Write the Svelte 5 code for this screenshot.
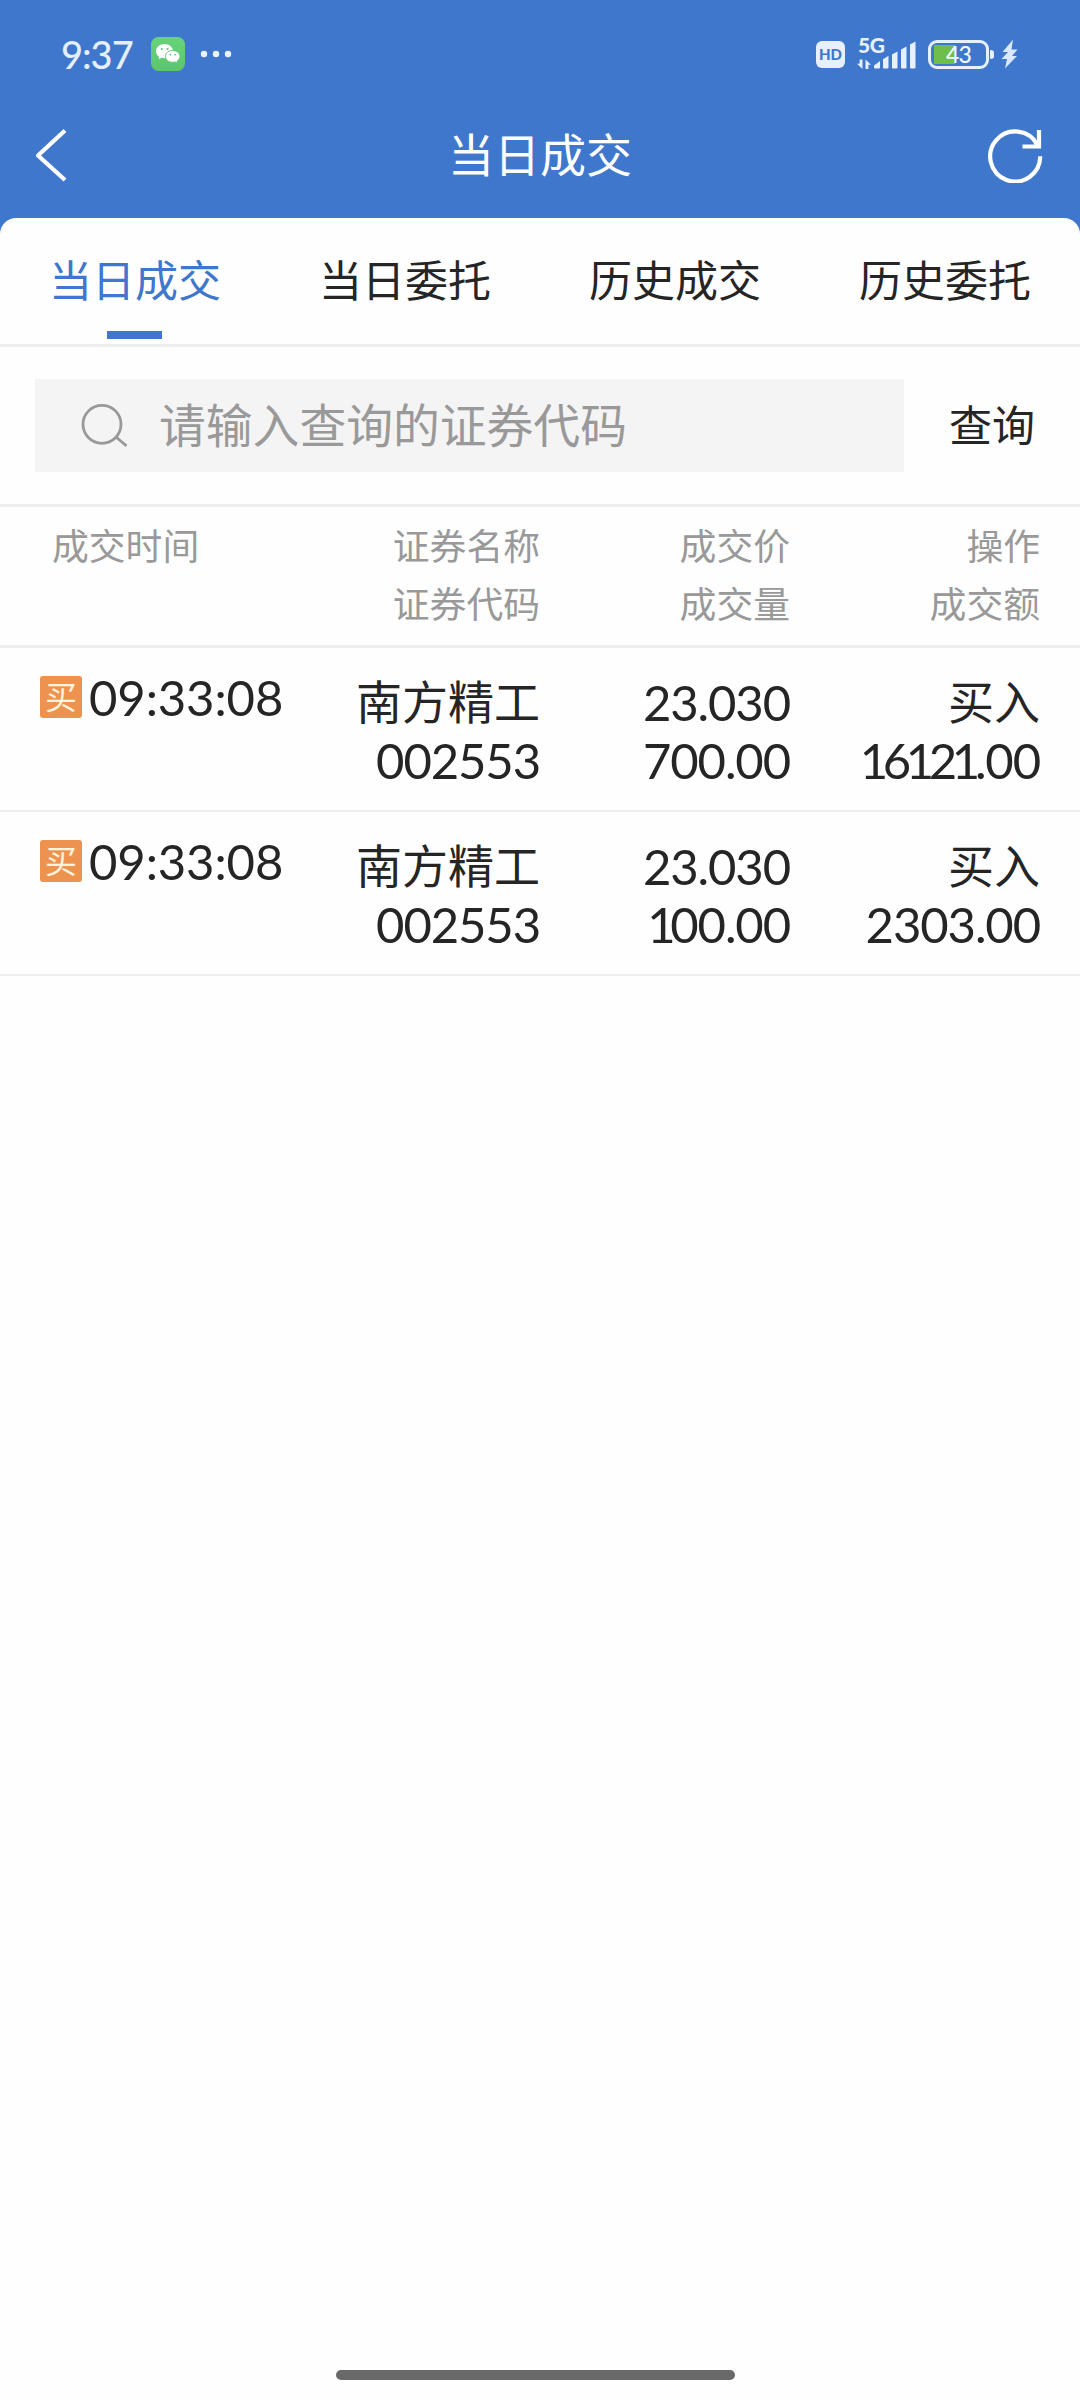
<script lang="ts">
  type Trade = {
    time: string;
    name: string;
    code: string;
    price: string;
    volume: string;
    side: string;
    amount: string;
  };

  const tabs = ['当日成交', '当日委托', '历史成交', '历史委托'];
  let activeTab = $state(0);

  const columns = [
    ['成交时间'],
    ['证券名称', '证券代码'],
    ['成交价', '成交量'],
    ['操作', '成交额'],
  ];

  const trades: Trade[] = [
    { time: '09:33:08', name: '南方精工', code: '002553', price: '23.030', volume: '700.00', side: '买入', amount: '16121.00' },
    { time: '09:33:08', name: '南方精工', code: '002553', price: '23.030', volume: '100.00', side: '买入', amount: '2303.00' },
  ];

  // a "1" is set narrower than the other digits
  const digits = (value: string) => value.split(/(1)/).filter(Boolean);
</script>

{#snippet num(value: string)}
  <span class="num">{#each digits(value) as part}{#if part === '1'}<span class="one">1</span>{:else}{part}{/if}{/each}</span>
{/snippet}

<div class="screen">
  <header>
    <div class="status">
      <span class="clock">9:37</span>
      <svg class="wechat" width="34" height="34" viewBox="0 0 34 34">
        <defs>
          <linearGradient id="green" x1="0" y1="0" x2="0" y2="1">
            <stop offset="0" stop-color="#67d47c" />
            <stop offset="1" stop-color="#5bc56b" />
          </linearGradient>
        </defs>
        <rect width="34" height="34" rx="7.5" fill="url(#green)" />
        <path d="M13.5 7C8.8 7 5 10.2 5 14.2c0 2.2 1.2 4.2 3 5.500L7.800 22.300l3-1.500c.9.2 1.800.4 2.700.4 4.700 0 8.500-3.200 8.500-7.100S18.200 7 13.500 7z" fill="#fff" />
        <path d="M21.700 13.500c-4 0-7.300 2.600-7.300 5.900s3.300 5.900 7.300 5.900c.9 0 1.800-.1 2.500-.4l2.500 1.400-.5-2.300c1.700-1.100 2.800-2.700 2.800-4.600 0-3.300-3.300-5.900-7.300-5.900z" fill="#fff" stroke="#60cb72" stroke-width="1" />
        <circle cx="10.800" cy="12" r="1.100" fill="#60cb72" />
        <circle cx="16.600" cy="12" r="1.100" fill="#60cb72" />
        <circle cx="19.300" cy="17.600" r=".9" fill="#60cb72" />
        <circle cx="24.200" cy="17.600" r=".9" fill="#60cb72" />
      </svg>
      <svg class="dots" width="32" height="8" viewBox="0 0 32 8" fill="#e9f2ff">
        <circle cx="4" cy="4" r="3.200" />
        <circle cx="16" cy="4" r="3.200" />
        <circle cx="28" cy="4" r="3.200" />
      </svg>
      <span class="grow"></span>
      <span class="hd">HD</span>
      <div class="signal">
        <span class="net">5G</span>
        <svg width="60" height="32" viewBox="0 0 60 32" fill="#e6f0ff">
          <path d="M5.500 21.500v9.500L0 25.700h2.600v-4.200zM8.500 31v-9.500l5.500 5.300h-2.600V31z" />
          <path d="M17 30.500v-3l6-4.500v6.500q0 1-1 1h-4q-1 0-1-1z" />
          <path d="M26 21.300l5.500-3.500v11.700q0 1-1 1H27q-1 0-1-1z" />
          <path d="M35 16.500l5.500-3v16q0 1-1 1H36q-1 0-1-1z" />
          <path d="M44 11.500l5.500-3v21q0 1-1 1H45q-1 0-1-1z" />
          <path d="M53 6.500l5.500-3v26q0 1-1 1H54q-1 0-1-1z" />
        </svg>
      </div>
      <div class="battery"><span>43</span></div>
      <i class="cap"></i>
      <svg class="bolt" width="18" height="30" viewBox="0 0 18 30">
        <path d="M12 .5L1.500 13H7L.5 20H6L4 29.500 16 17h-5l5.500-6.500H10.500z" fill="#dbe8ff" />
      </svg>
    </div>

    <div class="nav">
      <svg width="36" height="56" viewBox="0 0 36 56" fill="none" stroke="#fff" stroke-width="4.200">
        <path d="M32 3.500L5 28.500l27 24.500" stroke-linejoin="round" />
      </svg>
      <h1>当日成交</h1>
      <svg width="56" height="56" viewBox="0 0 56 56" fill="none" stroke="#fff" stroke-width="4.200">
        <path d="M53.200 29.200A25 25 0 1 1 50.400 18" />
        <path d="M52 3v16.500H35.500" />
      </svg>
    </div>
  </header>

  <main>
    <nav class="tabs">
      {#each tabs as tab, i}
        <button class:active={i === activeTab} onclick={() => (activeTab = i)}>{tab}</button>
      {/each}
    </nav>

    <div class="search">
      <div class="field">
        <svg width="46" height="46" viewBox="0 0 46 46" fill="none" stroke="#999" stroke-width="2.800">
          <circle cx="21" cy="21.300" r="19" />
          <path d="M35 34l10.500 9" />
        </svg>
        <span>请输入查询的证券代码</span>
      </div>
      <button>查询</button>
    </div>

    <div class="grid head">
      {#each columns as lines}
        <div class="cell">
          {#each lines as line}
            <div class="line">{line}</div>
          {/each}
        </div>
      {/each}
    </div>

    {#each trades as trade}
      <div class="grid row">
        <div class="cell time"><span class="tag">买</span>{@render num(trade.time)}</div>
        <div class="cell">
          <div class="line text">{trade.name}</div>
          <div class="line">{@render num(trade.code)}</div>
        </div>
        <div class="cell">
          <div class="line">{@render num(trade.price)}</div>
          <div class="line">{@render num(trade.volume)}</div>
        </div>
        <div class="cell">
          <div class="line text">{trade.side}</div>
          <div class="line">{@render num(trade.amount)}</div>
        </div>
      </div>
    {/each}
  </main>

  <div class="home"></div>
</div>

<style>
  :global(body) {
    margin: 0;
    background: #3f77cd;
  }

  .screen {
    display: flex;
    flex-direction: column;
    width: 1080px;
    height: 2400px;
    background: #3f77cd;
    color: #252525;
    font-family: 'Noto Sans CJK SC', sans-serif;
    overflow: hidden;
  }

  header {
    height: 218px;
    color: #fff;
  }

  .status {
    display: flex;
    align-items: center;
    height: 108px;
    padding: 0 61px;
    box-sizing: border-box;
  }

  .clock {
    width: 90px;
    font: 500 38px/40px Lato, sans-serif;
    letter-spacing: -1px;
    color: #e4efff;
  }

  .dots {
    margin-left: 15px;
  }

  .grow {
    flex: 1;
  }

  .hd {
    width: 29px;
    height: 27px;
    border-radius: 6px;
    background: #e6f0ff;
    color: #3f77cd;
    font: 900 15px/27px Lato, sans-serif;
    text-align: center;
  }

  .signal {
    position: relative;
    width: 60px;
    height: 32px;
    margin-left: 12px;
  }

  .net {
    position: absolute;
    left: 1px;
    top: -4px;
    font: 900 21px/22px Lato, sans-serif;
    letter-spacing: -0.5px;
    color: #e6f0ff;
  }

  .battery {
    display: flex;
    align-items: center;
    justify-content: center;
    width: 61px;
    height: 29px;
    margin-left: 11px;
    box-sizing: border-box;
    border: 3px solid #e6f0ff;
    border-radius: 9px;
    padding: 2px 3px;
    background: linear-gradient(#6fbd4b, #6fbd4b) 3px 2px / 21px 19px no-repeat;
    font: 500 23px/22px Lato, sans-serif;
    letter-spacing: -0.8px;
    color: #f2f8ff;
  }

  .cap {
    width: 4px;
    height: 9px;
    margin-left: 1px;
    border-radius: 1px 3px 3px 1px;
    background: #e6f0ff;
  }

  .bolt {
    margin-left: 7px;
  }

  .nav {
    display: flex;
    align-items: center;
    justify-content: space-between;
    height: 94px;
    padding: 0 37px 0 33px;
  }

  h1 {
    margin: 0 0 7px 24px;
    font-size: 46px;
    font-weight: 400;
    line-height: 60px;
  }

  main {
    flex: 1;
    border-radius: 16px 16px 0 0;
    background: #fefefe;
  }

  button {
    border: 0;
    padding: 0;
    background: none;
    font: inherit;
    color: inherit;
  }

  .tabs {
    display: flex;
    height: 126px;
    border-bottom: 3px solid #eee;
  }

  .tabs button {
    display: flex;
    flex: 1;
    flex-direction: column;
    align-items: center;
    padding-top: 30px;
    font-size: 43px;
    line-height: 60px;
  }

  .tabs .active {
    color: #3f77cd;
  }

  .tabs .active::after {
    content: '';
    width: 55px;
    height: 8px;
    margin: 23px 1px 0 0;
    background: #3f77cd;
  }

  .search {
    display: flex;
    align-items: center;
    height: 157px;
    border-bottom: 3px solid #eee;
  }

  .field {
    display: flex;
    align-items: center;
    width: 869px;
    height: 93px;
    margin-left: 35px;
    box-sizing: border-box;
    padding-left: 46px;
    background: #f4f4f4;
    color: #999;
    font-size: 46.800px;
  }

  .field span {
    margin: 0 0 7px 32px;
  }

  .search button {
    margin: 0 0 5px 45px;
    font-size: 43px;
  }

  .grid {
    display: grid;
    grid-template-columns: 290px 250px 250px 250px;
    text-align: right;
  }

  .line {
    height: 58px;
    line-height: 58px;
    white-space: nowrap;
  }

  .head {
    height: 138px;
    border-bottom: 3px solid #eee;
    color: #999;
    font-size: 36.800px;
  }

  .head .cell {
    padding-top: 8px;
  }

  .head .cell:first-child {
    padding-left: 52px;
    text-align: left;
  }

  .row {
    height: 162px;
    border-bottom: 2px solid #eee;
    font-size: 46px;
  }

  .row .cell {
    padding-top: 24px;
  }

  .row .text {
    line-height: 54px;
  }

  .row .time {
    display: flex;
    align-items: center;
    height: 42px;
    padding: 28px 0 0 40px;
  }

  .tag {
    width: 42px;
    height: 42px;
    margin-right: 7px;
    border-radius: 3px;
    background: #ee924f;
    color: #fff3dc;
    font-size: 32px;
    line-height: 38px;
    text-align: center;
  }

  .num {
    font-family: Lato, sans-serif;
    font-size: 49px;
    letter-spacing: -1.1px;
  }

  .time .num {
    letter-spacing: -0.1px;
  }

  .one {
    margin: 0 -4.300px;
  }

  .home {
    position: absolute;
    left: 336px;
    top: 2370px;
    width: 399px;
    height: 10px;
    border-radius: 5px;
    background: #696969;
  }
</style>
